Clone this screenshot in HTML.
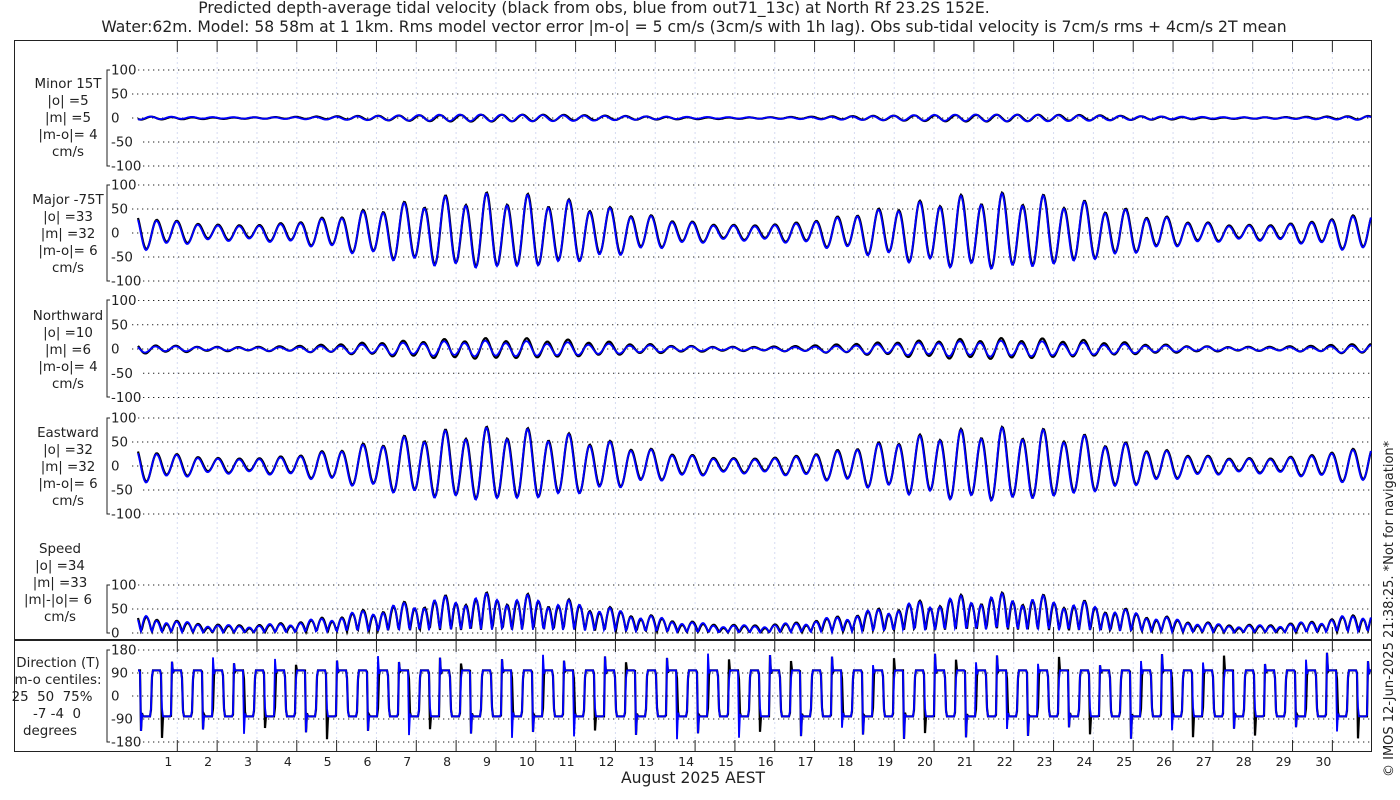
<!DOCTYPE html>
<html><head><meta charset="utf-8"><style>
html,body{margin:0;padding:0;background:#fff;width:1400px;height:800px;overflow:hidden}
svg{display:block}
text{font-family:"DejaVu Sans","Liberation Sans",sans-serif;fill:#222;white-space:pre}
</style></head><body>
<svg id="s" width="1400" height="800" viewBox="0 0 1400 800">
<text x="594" y="13" font-size="15.6" text-anchor="middle">Predicted depth-average tidal velocity (black from obs, blue from out71_13c) at North Rf 23.2S 152E.</text>
<text x="694" y="32" font-size="15.6" text-anchor="middle">Water:62m. Model: 58 58m at 1 1km. Rms model vector error |m-o| = 5 cm/s (3cm/s with 1h lag). Obs sub-tidal velocity is 7cm/s rms + 4cm/s 2T mean</text>
<rect x="14.5" y="40.5" width="1357" height="711" fill="none" stroke="#222" stroke-width="1"/>
<line x1="14" y1="640" x2="1372" y2="640" stroke="#222" stroke-width="2"/>
<g font-size="13.4" text-anchor="middle">
<text x="68" y="88">Minor 15T</text><text x="68" y="105">|o| =5</text><text x="68" y="122">|m| =5</text><text x="68" y="139">|m-o|= 4</text><text x="68" y="156">cm/s</text>
<text x="68" y="204">Major -75T</text><text x="68" y="221">|o| =33</text><text x="68" y="238">|m| =32</text><text x="68" y="255">|m-o|= 6</text><text x="68" y="272">cm/s</text>
<text x="68" y="320">Northward</text><text x="68" y="337">|o| =10</text><text x="68" y="354">|m| =6</text><text x="68" y="371">|m-o|= 4</text><text x="68" y="388">cm/s</text>
<text x="68" y="437">Eastward</text><text x="68" y="454">|o| =32</text><text x="68" y="471">|m| =32</text><text x="68" y="488">|m-o|= 6</text><text x="68" y="505">cm/s</text>
<text x="60" y="553">Speed</text><text x="60" y="570">|o| =34</text><text x="60" y="587">|m| =33</text><text x="58" y="604">|m|-|o|= 6</text><text x="60" y="621">cm/s</text>
<text x="58" y="667">Direction (T)</text><text x="58" y="684">m-o centiles:</text><text x="52" y="701">25  50  75%</text><text x="57" y="718">-7 -4  0</text><text x="50" y="735">degrees</text>
</g>
<text x="693" y="783" font-size="15.6" text-anchor="middle">August 2025 AEST</text>
<text transform="translate(1393,777) rotate(-90)" font-size="13">© IMOS 12-Jun-2025 21:38:25. *Not for navigation*</text>
<g id="g"></g>
</svg>
<script>
var g=document.getElementById('g'),h='';
var X0=138,X1=1371,DX=39.85;
for(var d=1;d<=30;d++){var x=177.3+(d-1)*39.83;
 h+='<line x1="'+x+'" y1="52" x2="'+x+'" y2="742" stroke="#d6dbf2" stroke-width="1" stroke-dasharray="2,3"/>';
 h+='<line x1="'+x+'" y1="41" x2="'+x+'" y2="52" stroke="#222"/>';
 h+='<line x1="'+x+'" y1="627" x2="'+x+'" y2="652" stroke="#222"/>';
 h+='<line x1="'+x+'" y1="740" x2="'+x+'" y2="751" stroke="#222"/>';
 h+='<text x="'+(x-9)+'" y="766" font-size="12.5" text-anchor="middle">'+d+'</text>';}
var panels=[{z:118,s:0.48,t:[100,50,0,-50,-100],top:70,bot:166},
{z:233,s:0.48,t:[100,50,0,-50,-100],top:185,bot:281},
{z:349,s:0.485,t:[100,50,0,-50,-100],top:300,bot:397},
{z:466,s:0.48,t:[100,50,0,-50,-100],top:418,bot:514},
{z:633,s:0.48,t:[100,50,0],top:585,bot:633},
{z:696,s:0.2556,t:[180,90,0,-90,-180],top:650,bot:742}];
panels.forEach(function(p){
 h+='<path d="M110,'+p.top+'H107V'+p.bot+'H110" fill="none" stroke="#222"/>';
 p.t.forEach(function(v){var y=p.z-v*p.s;
  h+='<text x="111" y="'+(y+4.5)+'" font-size="13.4">'+v+'</text>';
  h+='<line x1="'+(v<0?143:(v>=100?138:132))+'" y1="'+y+'" x2="1371" y2="'+y+'" stroke="#222" stroke-dasharray="1.3,3.7"/>';});
});
function env(t){return 42+28*Math.cos(2*Math.PI*(t-8.9)/12.7);}
function maj(t,m){var w=2*Math.PI/0.5175;var a=env(t);
 return a*Math.cos(w*t+0.6+(m?0.09:0))+0.18*a*Math.cos(2*Math.PI/0.997*t+1.3)+(m?0:2);}
function mino(t,m){var w=2*Math.PI/0.5175;var a=env(t)/10;return a*Math.cos(w*t+2.2+(m?0.25:0))+ (m?0.5:-0.5)*Math.sin(t);}
var cols=['#000','#0000ff'];
for(var k=0;k<2;k++){var m=k==1;var P=['','','','','',''];
 for(var x=X0;x<=X1;x+=1){var t=(x-X0)/DX;var M=maj(t,m),n=mino(t,m);
  var north=(M*0.26+n*0.9)*(m?0.8:1);
  var east=M*0.97;
  var sp=Math.sqrt(M*M+n*n);
  var ph=((2*Math.PI/0.5175*t+0.6+(m?0.05:0))%(2*Math.PI)+2*Math.PI)%(2*Math.PI);
  var c=Math.cos(ph);
  var dir=c>0?(100+ (c<0.35?-15*(0.35-c)/0.35*3:0)):(-80+(c>-0.35?15*(0.35+c)/0.35*3:0));
  if(Math.abs(c)<0.07){var j=(Math.floor(x)*37%50);dir=(Math.sin(ph)>0?-120-j:120+j);}
  var v=[n,M,north,east,sp,dir];
  for(var i=0;i<6;i++){var y=panels[i].z-v[i]*panels[i].s;P[i]+=(x==X0?'M':'L')+x+','+y.toFixed(1);}
 }
 for(var i=0;i<6;i++)h+='<path d="'+P[i]+'" fill="none" stroke="'+cols[k]+'" stroke-width="'+(m?1.8:2.2)+'"/>';
}
g.innerHTML=h;
</script>
</body></html>
